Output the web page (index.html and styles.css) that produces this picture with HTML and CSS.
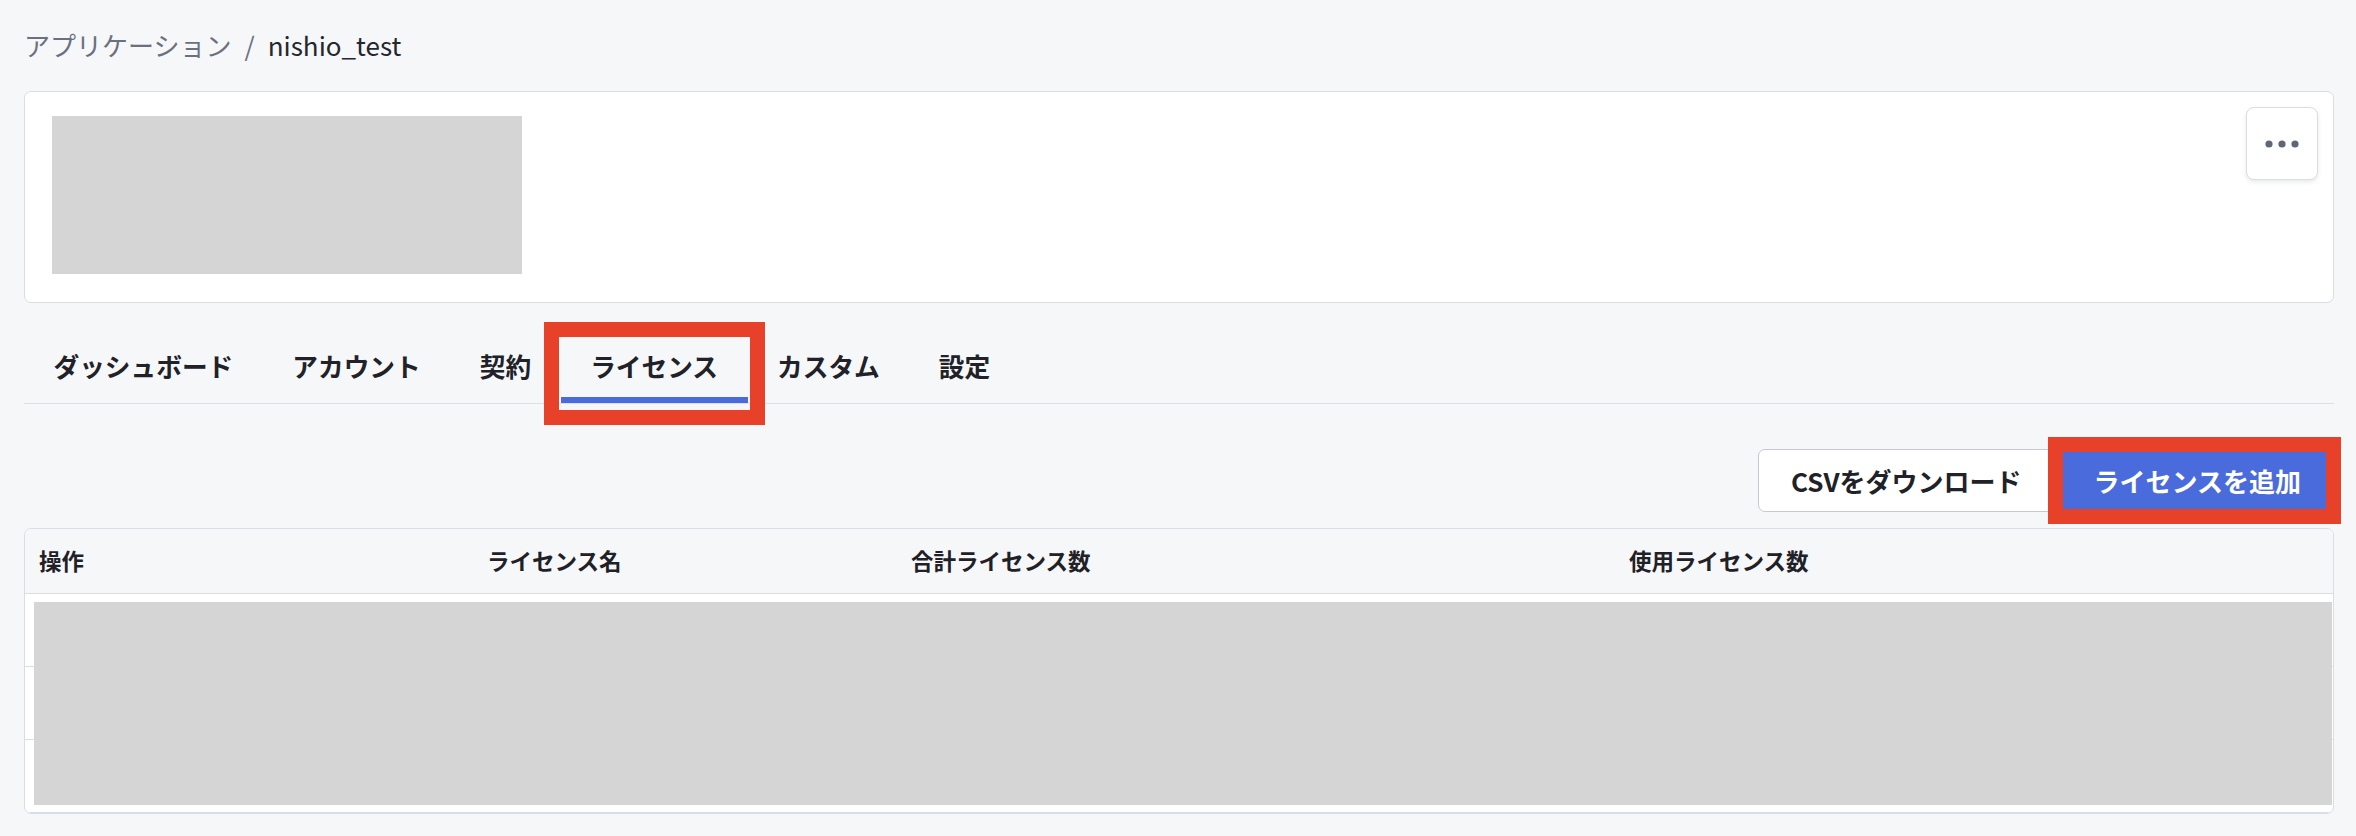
FILE: index.html
```html
<!DOCTYPE html>
<html lang="ja">
    <head>
        <meta charset="UTF-8">
        <meta name="viewport" content="width=device-width, initial-scale=1.0">
        <title>ライセンス - nishio_test</title>
        <link rel="stylesheet" href="styles.css">
    </head>
    <body>
        <div class="page">
            <div class="breadcrumb">
                <span class="crumb-parent">アプリケーション</span>
                <span class="crumb-sep">/</span>
                <span class="crumb-current">nishio_test</span>
            </div>

            <div class="app-card">
                <div class="app-logo"></div>
                <button class="more-button" aria-label="その他">
                    <svg width="40" height="10" viewBox="0 0 40 10">
                        <circle cx="7" cy="5" r="3.6" fill="#5f6677" />
                        <circle cx="20" cy="5" r="3.6" fill="#5f6677" />
                        <circle cx="33" cy="5" r="3.6" fill="#5f6677" />
                    </svg>
                </button>
            </div>

            <nav class="tabs">
                <a class="tab">ダッシュボード</a>
                <a class="tab">アカウント</a>
                <a class="tab">契約</a>
                <a class="tab active marked">ライセンス</a>
                <a class="tab">カスタム</a>
                <a class="tab">設定</a>
            </nav>

            <div class="toolbar">
                <button class="btn btn-outline">CSVをダウンロード</button>
                <button class="btn btn-primary marked">ライセンスを追加</button>
            </div>

            <div class="table">
                <div class="table-head">
                    <div class="cell">操作</div>
                    <div class="cell">ライセンス名</div>
                    <div class="cell">合計ライセンス数</div>
                    <div class="cell">使用ライセンス数</div>
                </div>
                <div class="table-body">
                    <div class="table-row"><div class="cell"></div><div class="cell"></div><div class="cell"></div><div class="cell"></div></div>
                    <div class="table-row"><div class="cell"></div><div class="cell"></div><div class="cell"></div><div class="cell"></div></div>
                    <div class="table-row"><div class="cell"></div><div class="cell"></div><div class="cell"></div><div class="cell"></div></div>
                    <div class="redacted"></div>
                </div>
            </div>
        </div>
    </body>
</html>
```

FILE: styles.css
```css
body {
    font-family: "Noto Sans CJK JP", "Noto Sans", sans-serif;
    margin: 0;
    padding: 0;
    background-color: #f6f7f9;
    color: #202228;
}

.page {
    padding: 24px 22px 0 24px;
    display: flex;
    flex-direction: column;
}

/* breadcrumb */
.breadcrumb {
    display: flex;
    align-items: center;
    gap: 13px;
    height: 42px;
    font-size: 26px;
    line-height: 42px;
}

.crumb-parent,
.crumb-sep {
    color: #6b7080;
}

.crumb-current {
    color: #24272e;
}

/* app header card */
.app-card {
    margin-top: 25px;
    display: flex;
    justify-content: space-between;
    align-items: flex-start;
    padding: 15px 15px 28px 27px;
    background-color: #ffffff;
    border: 1px solid #dadde5;
    border-radius: 7px;
}

.app-logo {
    width: 470px;
    height: 158px;
    margin-top: 9px;
    background-color: #d5d5d5;
}

.more-button {
    width: 72px;
    height: 73px;
    display: flex;
    align-items: center;
    justify-content: center;
    padding: 0;
    background-color: #ffffff;
    border: 1px solid #dadde5;
    border-radius: 8px;
    box-shadow: 0 2px 4px rgba(30, 35, 50, 0.1);
    cursor: pointer;
}

/* tabs */
.tabs {
    margin-top: 19px;
    display: flex;
    border-bottom: 1px solid #dcdfe6;
}

.tab {
    position: relative;
    padding: 26px 29.5px 13px;
    font-size: 25.7px;
    line-height: 36px;
    font-weight: bold;
    color: #202228;
    border-bottom: 6px solid transparent;
    cursor: pointer;
}

.tab.active {
    border-bottom-color: #4a6bdb;
}

/* red annotation frames drawn over the screenshot */
.marked {
    position: relative;
}

.marked::after {
    content: "";
    position: absolute;
    border: 15px solid #e8412a;
    pointer-events: none;
}

.tab.marked::after {
    top: 0;
    left: -17px;
    right: -17px;
    bottom: -28px;
}

.btn.marked::after {
    top: -13px;
    left: -14px;
    right: -8px;
    bottom: -13px;
}

/* toolbar */
.toolbar {
    margin-top: 45px;
    display: flex;
    justify-content: flex-end;
    gap: 6px;
}

.btn {
    height: 63px;
    padding: 0 32px;
    font-family: inherit;
    font-size: 26px;
    font-weight: bold;
    border-radius: 7px;
    cursor: pointer;
}

.btn-outline {
    background-color: #ffffff;
    color: #202228;
    border: 1px solid #c6c9d3;
}

.btn-primary {
    background-color: #4a6bdb;
    color: #ffffff;
    border: 1px solid #4a6bdb;
}

/* table */
.table {
    margin-top: 16px;
    background-color: #ffffff;
    border: 1px solid #dadde5;
    border-radius: 7px;
    overflow: hidden;
}

.table-head,
.table-row {
    display: grid;
    grid-template-columns: 448px 424px 718px 1fr;
}

.table-head {
    height: 65px;
    padding-bottom: 3px;
    box-sizing: border-box;
    align-items: center;
    background-color: #f6f7f9;
    border-bottom: 1px solid #dadde5;
    font-size: 22.5px;
    font-weight: bold;
    color: #1f2126;
}

.cell {
    padding: 0 14px;
}

.table-body {
    position: relative;
}

.table-row {
    height: 72px;
    border-bottom: 1px solid #dadde5;
}

.table-row:last-of-type {
    border-bottom: none;
    height: 73px;
}

.redacted {
    position: absolute;
    top: 8px;
    left: 9px;
    right: 1px;
    bottom: 8px;
    background-color: #d5d5d5;
}
```
